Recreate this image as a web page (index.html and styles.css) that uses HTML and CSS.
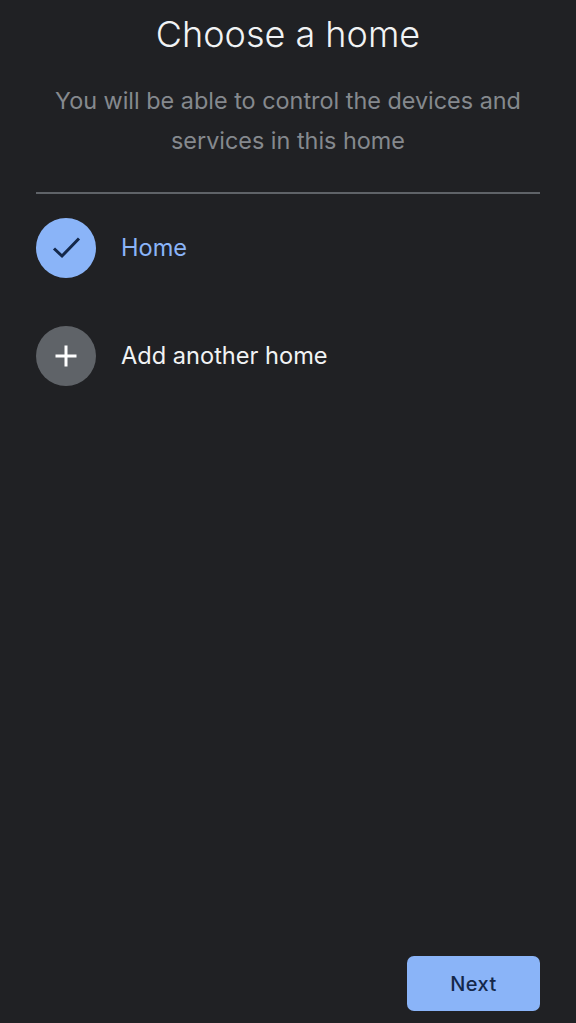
FILE: index.html
```html
<!DOCTYPE html>
<html lang="en">
<head>
  <meta charset="UTF-8" />
  <title>Choose a home</title>
  <meta name="viewport" content="width=device-width, initial-scale=1" />
  <link rel="stylesheet" href="styles.css">
</head>
<body>
  <main class="screen">
    <h1 class="title">Choose a home</h1>
    <p class="subtitle">You will be able to control the devices and<br>services in this home</p>
    <hr class="divider">

    <div class="home-list">
      <div class="home-row">
        <div class="circle circle-selected">
          <svg width="30" height="30" viewBox="0 0 30 30"><path d="M3 15.5l8 7.5L28 5.5" fill="none" stroke="#14284a" stroke-width="3"/></svg>
        </div>
        <span class="home-label home-label-selected">Home</span>
      </div>
      <div class="home-row">
        <div class="circle circle-add">
          <svg width="24" height="24" viewBox="0 0 24 24"><path d="M12 1.5v21M1.5 12h21" fill="none" stroke="#fff" stroke-width="3"/></svg>
        </div>
        <span class="home-label">Add another home</span>
      </div>
    </div>

    <div class="footer">
      <button class="next-btn">Next</button>
    </div>
  </main>
</body>
</html>
```

FILE: styles.css
```css
body {
  margin: 0;
  background-color: #202124;
  font-family: 'Inter', 'Roboto', sans-serif;
}

.screen {
  height: 1023px;
  box-sizing: border-box;
  padding: 0 36px;
  display: flex;
  flex-direction: column;
  overflow: hidden;
}

.title {
  margin: 11px 0 0;
  font-family: 'Inter', sans-serif;
  font-size: 36px;
  line-height: 46px;
  font-weight: 300;
  color: #f1f3f4;
  text-align: center;
}

.subtitle {
  margin: 24px 0 0;
  font-size: 23.4px;
  line-height: 40px;
  color: #85898e;
  text-align: center;
}

.divider {
  margin: 31px 0 0;
  border: none;
  height: 2px;
  background-color: #5f6368;
}

.home-list {
  margin-top: 24px;
  display: flex;
  flex-direction: column;
  gap: 48px;
}

.home-row {
  display: flex;
  align-items: center;
  gap: 25px;
}

.circle {
  width: 60px;
  height: 60px;
  border-radius: 50%;
  display: flex;
  align-items: center;
  justify-content: center;
}

.circle-selected {
  background-color: #8ab4f8;
}

.circle-add {
  background-color: #5f6368;
}

.home-label {
  padding-bottom: 2px;
  font-size: 23.6px;
  color: #f1f3f4;
}

.home-label-selected {
  color: #8ab4f8;
}

.footer {
  margin-top: auto;
  margin-bottom: 12px;
  display: flex;
  justify-content: flex-end;
}

.next-btn {
  width: 133px;
  height: 55px;
  border: none;
  border-radius: 7px;
  background-color: #8ab4f8;
  color: #14284a;
  font-family: 'Inter', 'Roboto', sans-serif;
  font-size: 20px;
  font-weight: 500;
  letter-spacing: 0.4px;
}
```
